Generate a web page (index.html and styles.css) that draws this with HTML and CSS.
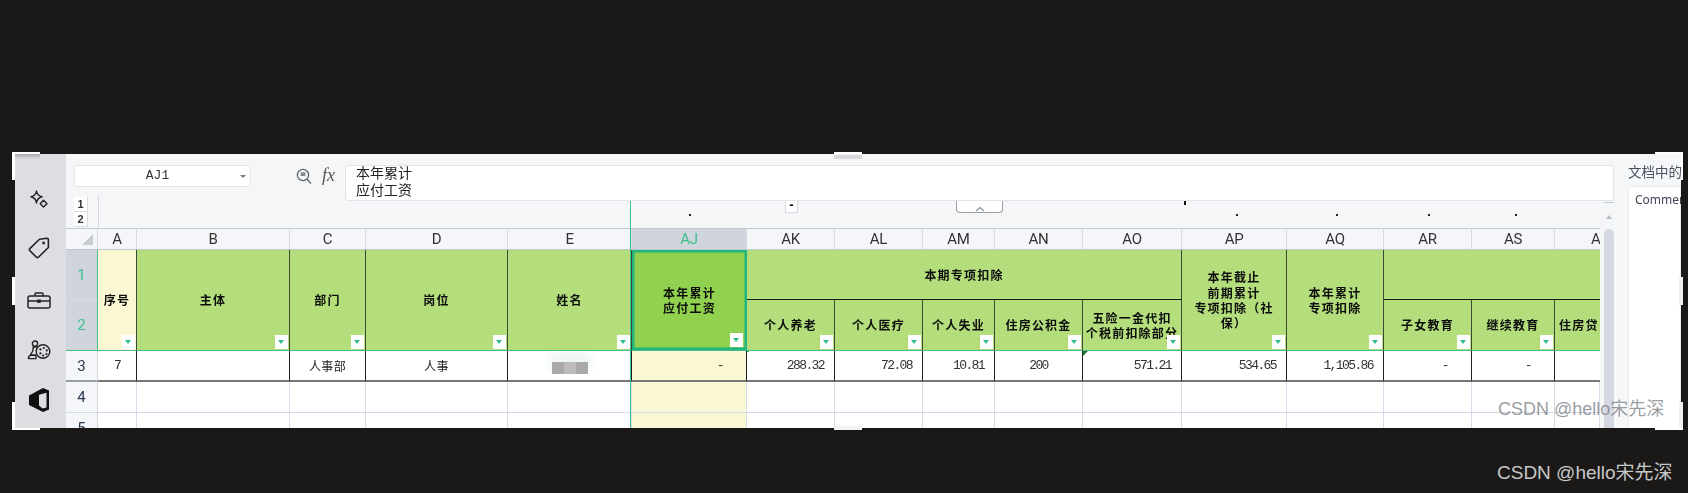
FILE: index.html
```html
<!DOCTYPE html>
<html lang="zh">
<head>
  <meta charset="utf-8">
  <title>工资表</title>
  <link rel="stylesheet" href="styles.css">
</head>
<body>
<div class="shot">
  <div class="window">
    <div class="blurry">
      <div class="sidebar">
        <svg class="ico" width="18" height="18" viewBox="0 0 18 18" fill="none" stroke="#222" stroke-width="1.4" stroke-linejoin="round"><path d="M6.5 1Q7.2 5.6 12 6.8Q7.2 8 6.5 13Q5.8 8 1 6.8Q5.8 5.6 6.5 1Z"/><path d="M13.5 10.2L17 13.7L13.5 17L10.2 13.7Z"/></svg>
        <svg class="ico" width="22" height="22" viewBox="0 0 22 22" fill="none" stroke="#222" stroke-width="1.6" stroke-linejoin="round"><path d="M11.5 2.2L19 1.2Q20.4 1.2 20.4 2.6V10.5L10.4 20.2Q9.4 21 8.4 20.2L1.8 13.6Q1 12.6 1.8 11.6Z"/><circle cx="15.6" cy="6" r="1.4" fill="#222" stroke="none"/></svg>
        <svg class="ico" width="24" height="17" viewBox="0 0 24 17" fill="none" stroke="#222" stroke-width="1.5" stroke-linejoin="round"><rect x="1" y="4" width="22" height="12" rx="2"/><path d="M8 4V2Q8 1 9 1H15Q16 1 16 2V4"/><path d="M1 9H23"/><rect x="10.2" y="7.5" width="3.6" height="3.4" fill="#222" stroke="none"/></svg>
        <svg class="ico" width="24" height="20" viewBox="0 0 24 20" fill="none" stroke="#222" stroke-width="1.4" stroke-linejoin="round"><circle cx="8" cy="3.6" r="2.6"/><path d="M5.4 7H10.6M6.4 7Q6.6 11 3.4 15H9M1.4 18.6Q1.4 15.4 4 15.4H9V18.6Z"/><circle cx="16" cy="11.5" r="6.8" fill="#dcdee2"/><g fill="#222" stroke="none"><circle cx="13.4" cy="9.4" r="1.1"/><circle cx="16.8" cy="8" r="1.1"/><circle cx="19.8" cy="10.4" r="1.1"/><circle cx="19.4" cy="14" r="1.1"/><circle cx="13.4" cy="13.4" r="1.1"/><circle cx="16.2" cy="15.6" r="1.1"/></g></svg>
        <svg class="ico" width="20" height="24" viewBox="0 0 20 24"><path d="M0 7.5L14 0L20 2.5V21.5L14 24L0 17Z" fill="#111"/><path d="M10 6.8L17.5 4.8V19.5L13.5 20.6L10 17.4Z" fill="#dcdee2"/></svg>
      </div>

      <div class="main">
        <div class="formula-bar">
          <div class="name-box">AJ1<span class="caret"></span></div>
          <svg class="zoom-ico" width="16" height="17" viewBox="0 0 16 17" fill="none" stroke="#5d6670" stroke-width="1.3"><circle cx="7" cy="7" r="5.6"/><path d="M4.6 7H9.4M4.6 5.2H9.4M11 11L15 15.6"/></svg>
          <span class="fx">fx</span>
          <div class="formula"><div class="formula-text">本年累计<br>应付工资</div></div>
        </div>

        <div class="work">
          <div class="sheet">
            <div class="outline">
              <div class="levels"><span>1</span><span>2</span></div>
              <span class="sel-line"></span>
              <span class="minus">-</span>
              <span class="fold"><svg width="10" height="6" viewBox="0 0 10 6" fill="none" stroke="#8c929c" stroke-width="1.2"><path d="M1 5L5 1.5L9 5"/></svg></span>
              <span class="tick"></span>
              <span class="dot d1"></span>
              <span class="dot d2"></span>
              <span class="dot d3"></span>
              <span class="dot d4"></span>
              <span class="dot d5"></span>
            </div>
            <table class="grid">
              <colgroup>
                <col class="w32"><col class="w39"><col class="w153"><col class="w76"><col class="w142"><col class="w124"><col class="w115">
                <col class="w88"><col class="w88"><col class="w72"><col class="w88"><col class="w99"><col class="w105"><col class="w97"><col class="w88"><col class="w83"><col class="w45">
              </colgroup>
              <tr class="letters">
                <th class="corner"><span class="tri"></span></th>
                <th>A</th><th>B</th><th>C</th><th>D</th><th>E</th><th class="cur">AJ</th>
                <th>AK</th><th>AL</th><th>AM</th><th>AN</th><th>AO</th><th>AP</th><th>AQ</th><th>AR</th><th>AS</th><th class="cut">A</th>
              </tr>
              <tr class="r1">
                <th class="num on">1</th>
                <td rowspan="2" class="hd cream">序号<i class="flt"></i></td>
                <td rowspan="2" class="hd">主体<i class="flt"></i></td>
                <td rowspan="2" class="hd">部门<i class="flt"></i></td>
                <td rowspan="2" class="hd">岗位<i class="flt"></i></td>
                <td rowspan="2" class="hd">姓名<i class="flt"></i></td>
                <td rowspan="2" class="hd active">本年累计<br>应付工资<i class="flt"></i><b class="handle"></b></td>
                <td colspan="5" class="hd group">本期专项扣除</td>
                <td rowspan="2" class="hd">本年截止<br>前期累计<br>专项扣除（社<br>保）<i class="flt"></i></td>
                <td rowspan="2" class="hd">本年累计<br>专项扣除<i class="flt"></i></td>
                <td colspan="3" class="hd group end"></td>
              </tr>
              <tr class="r2">
                <th class="num on">2</th>
                <td class="hd sub">个人养老<i class="flt"></i></td>
                <td class="hd sub">个人医疗<i class="flt"></i></td>
                <td class="hd sub">个人失业<i class="flt"></i></td>
                <td class="hd sub">住房公积金<i class="flt"></i></td>
                <td class="hd sub">五险一金代扣<br><span class="nowrap">个税前扣除部分</span><i class="flt"></i></td>
                <td class="hd sub">子女教育<i class="flt"></i></td>
                <td class="hd sub">继续教育<i class="flt"></i></td>
                <td class="hd sub end clip">住房贷</td>
              </tr>
              <tr class="r3">
                <th class="num">3</th>
                <td class="val mid">7</td>
                <td></td>
                <td class="txt">人事部</td>
                <td class="txt">人事</td>
                <td class="txt"><span class="mosaic"><i></i><i></i><i></i></span></td>
                <td class="val dash cream">-</td>
                <td class="val">288.32</td>
                <td class="val">72.08</td>
                <td class="val">10.81</td>
                <td class="val mid">200</td>
                <td class="val flag">571.21</td>
                <td class="val">534.65</td>
                <td class="val">1,105.86</td>
                <td class="val dash">-</td>
                <td class="val dash">-</td>
                <td></td>
              </tr>
              <tr class="blank">
                <th class="num">4</th>
                <td></td><td></td><td></td><td></td><td></td><td class="cream"></td>
                <td></td><td></td><td></td><td></td><td></td><td></td><td></td><td></td><td></td><td></td>
              </tr>
              <tr class="blank">
                <th class="num">5</th>
                <td></td><td></td><td></td><td></td><td></td><td class="cream"></td>
                <td></td><td></td><td></td><td></td><td></td><td></td><td></td><td></td><td></td><td></td>
              </tr>
            </table>
          </div>
          <div class="vscroll">
            <span class="vs-line"></span>
            <span class="vs-up"></span>
            <span class="vs-thumb"></span>
          </div>
        </div>
      </div>

      <div class="panel">
        <div class="panel-title">文档中的批注</div>
        <div class="panel-box">Comment</div>
      </div>
    </div>

    <!-- crop handles -->
    <span class="grip g-tl"></span>
    <span class="grip g-tc"></span>
    <span class="grip g-tr"></span>
    <span class="grip g-ml"></span>
    <span class="grip g-mr"></span>
    <span class="grip g-bl"></span>
    <span class="grip g-bc"></span>
    <span class="grip g-br"></span>

    <span class="mark-in">CSDN @hello宋先深</span>
  </div>
  <span class="mark-out">CSDN @hello宋先深</span>
</div>
</body>
</html>
```

FILE: styles.css
```css
* { box-sizing: border-box; }

html, body {
	margin: 0;
	height: 100%;
	overflow: hidden;
	background: #1a1918;
}

.shot {
	height: 493px;
	padding: 154px 0 0 15px;
	font-family: "Noto Sans CJK SC", "Noto Sans", sans-serif;
	color: #333;
}

.window {
	position: relative;
	width: 1666px;
	height: 274px;
}

.blurry {
	display: flex;
	height: 100%;
	overflow: hidden;
	filter: blur(0.35px);
}

/* left icon rail */
.sidebar {
	width: 51px;
	flex: none;
	background: #dcdee2;
	display: flex;
	flex-direction: column;
	align-items: center;
	padding-top: 36px;
}
.ico { flex: none; margin-right: 4px; }
.ico:nth-child(1) { margin-bottom: 29px; }
.ico:nth-child(2) { margin-bottom: 33px; }
.ico:nth-child(3) { margin-bottom: 31px; }
.ico:nth-child(4) { margin-bottom: 28px; }

.main {
	width: 1549px;
	flex: none;
	background: #f5f6f8;
}

/* formula bar */
.formula-bar {
	height: 47px;
	display: flex;
	align-items: flex-start;
	padding: 11px 1px 0 8px;
}
.name-box {
	position: relative;
	width: 177px;
	height: 22px;
	background: #fff;
	border: 1px solid #e4e6ea;
	border-radius: 3px;
	font: 13px/20px "Liberation Mono", monospace;
	text-align: center;
	padding-right: 10px;
}
.caret {
	position: absolute;
	right: 4px;
	top: 9px;
	border: 3px solid transparent;
	border-top: 3px solid #777;
	border-bottom: 0;
}
.zoom-ico { margin: 3px 0 0 45px; flex: none; }
.fx {
	width: 33px;
	padding-left: 10px;
	font: italic 18px/20px "Liberation Serif", serif;
	color: #555;
}
.formula {
	flex: 1;
	height: 36px;
	background: #fff;
	border: 1px solid #e2e4e9;
	border-radius: 3px;
	padding: 0 0 0 10px;
	overflow: hidden;
}
.formula-text {
	margin-top: -2px;
	font-size: 14px;
	line-height: 17px;
	color: #222;
}

.work {
	display: flex;
	height: 227px;
}
.sheet {
	width: 1534px;
	flex: none;
}

/* group outline strip */
.outline {
	position: relative;
	height: 27px;
}
.levels {
	position: absolute;
	left: 8px;
	top: -4px;
	width: 14px;
	font: 11px/14px "Liberation Sans", sans-serif;
	text-align: center;
	font-weight: bold;
}
.levels span {
	display: block;
	height: 15px;
	background: #fff;
	border: 1px solid #d8dbe3;
	border-width: 0 1px 1px 0;
}
.levels:after {
	content: "";
	position: absolute;
	left: 24px;
	top: -2px;
	height: 33px;
	border-left: 1px solid #d4d7df;
}
/* selected column edge, runs down over the sheet */
.sel-line {
	position: absolute;
	z-index: 1;
	left: 564px;
	top: 0;
	height: 227px;
	border-left: 1px solid #3fc08d;
}
.minus {
	position: absolute;
	left: 719px;
	top: 0;
	width: 13px;
	height: 12px;
	background: #fff;
	border: 1px solid #d4d7df;
	border-top: 0;
	font: bold 13px/8px "Liberation Sans", sans-serif;
	text-align: center;
	color: #000;
}
.fold {
	position: absolute;
	left: 890px;
	top: 0;
	width: 47px;
	height: 12px;
	background: #fff;
	border: 1.5px solid #9a9da3;
	border-top: 0;
	border-radius: 0 0 4px 4px;
	text-align: center;
	line-height: 8px;
}
.tick {
	position: absolute;
	left: 1118px;
	top: 0;
	width: 2px;
	height: 4px;
	background: #111;
}
.dot {
	position: absolute;
	top: 13px;
	width: 2px;
	height: 2px;
	background: #222;
}
.d1 { left: 623px; }
.d2 { left: 1170px; }
.d3 { left: 1270px; }
.d4 { left: 1362px; }
.d5 { left: 1449px; }

/* the sheet itself */
.grid {
	table-layout: fixed;
	width: 1534px;
	border-collapse: separate;
	border-spacing: 0;
	background: #fff;
}
.w32 { width: 32px; }
.w39 { width: 39px; }
.w153 { width: 153px; }
.w76 { width: 76px; }
.w142 { width: 142px; }
.w124 { width: 124px; }
.w115 { width: 115px; }
.w88 { width: 88px; }
.w72 { width: 72px; }
.w99 { width: 99px; }
.w105 { width: 105px; }
.w97 { width: 97px; }
.w83 { width: 83px; }
.w45 { width: 45px; }

th, td {
	padding: 0;
	overflow: hidden;
}

.letters th {
	height: 22px;
	background: #f5f6f9;
	border-top: 1px solid #c3c9d8;
	border-bottom: 1px solid #c0c5d2;
	border-right: 1px solid #d6d9e3;
	font: 400 15px/20px Roboto, sans-serif;
	letter-spacing: -0.3px;
	color: #333;
}
.letters .cur {
	background: #d0d4dc;
	color: #3cc08e;
}
.letters .cut {
	border-right: 0;
	text-align: left;
	padding-left: 36px;
}
.letters .corner { position: relative; }
.tri {
	position: absolute;
	right: 4px;
	bottom: 4px;
	border-style: solid;
	border-width: 0 0 11px 11px;
	border-color: transparent transparent #c9ccd2 transparent;
}

.r1 { height: 50px; }
.r2 { height: 51px; }
.r3 { height: 31px; }
.blank { height: 31px; }

.num {
	background: #f5f6f9;
	border-right: 1px solid #d0d4de;
	border-bottom: 1px solid #d5d9e6;
	font: 400 15px/18px Roboto, sans-serif;
	color: #2c3850;
	text-align: center;
}
.num.on {
	background: #d0d4dc;
	color: #3cc08e;
	border-right: 1.5px solid #45bd8d;
	border-bottom: 1px solid #d9dce3;
}
.r2 .num { border-bottom: 1px solid #45bd8d; }

.hd {
	position: relative;
	background: #b4de7c;
	font-size: 12px;
	font-weight: 700;
	line-height: 15.4px;
	letter-spacing: 1.2px;
	color: #0c0c0c;
	text-align: center;
	border-right: 1px solid #3f4a35;
	border-bottom: 1px solid #45bd8d;
}
.hd.cream { background: #faf7d2; }
.hd.group {
	border-bottom: 1px solid #1a1a1a;
}
.hd.end, .letters .end { border-right: 0; }
.hd.sub { white-space: nowrap; }
.clip { text-align: left; padding-left: 4px; }
.nowrap { white-space: nowrap; }

.hd.active {
	background: #90d14f;
	box-shadow: inset 0 0 0 2.5px #22b67c;
	overflow: visible;
	border-right: 0;
}
.handle {
	position: absolute;
	right: -2px;
	bottom: -2px;
	width: 4px;
	height: 4px;
	background: #22b67c;
}

/* filter button in header cell */
.flt {
	position: absolute;
	right: 1px;
	bottom: 1px;
	width: 13px;
	height: 14px;
	background: #fff;
}
.flt:after {
	content: "";
	position: absolute;
	left: 3px;
	top: 5px;
	border-style: solid;
	border-width: 4px 3.5px 0 3.5px;
	border-color: #2dbe8a transparent transparent transparent;
}
.active .flt { right: 4px; bottom: 3px; }

.r3 td {
	position: relative;
	border-right: 1px solid #222;
	border-bottom: 2px solid #777;
}
.r3 td:last-child { border-right: 0; }
.r3 .num { border-bottom: 2px solid #9a9ca3; }
.blank td {
	border-right: 1px solid #d8dbeb;
	border-bottom: 1px solid #d4d8ea;
}
.cream { background: #faf8d2; }

.val {
	font: 13px/18px "Liberation Mono", monospace;
	letter-spacing: -1.6px;
	text-align: right;
	padding-right: 10px;
	color: #333;
}
.val.mid { text-align: center; padding-right: 0; }
.val.dash { padding-right: 23px; }
.val.flag:before {
	content: "";
	position: absolute;
	left: 0;
	top: 0;
	border-style: solid;
	border-width: 5px 5px 0 0;
	border-color: #1f7a30 transparent transparent transparent;
}

.txt {
	font-size: 12px;
	letter-spacing: 0.4px;
	text-align: center;
	color: #222;
}

/* blurred-out name */
.mosaic {
	display: inline-flex;
	vertical-align: middle;
	box-shadow: 0 -7px 9px 3px #eff7f2;
}
.mosaic i {
	width: 12px;
	height: 12px;
	background: #a9a9a9;
}
.mosaic i:nth-child(2) { background: #bcbcbc; }

/* scrollbar */
.vscroll {
	position: relative;
	width: 15px;
	background: #f5f6f8;
}
.vs-line {
	position: absolute;
	left: 4px;
	top: 1px;
	width: 10px;
	border-top: 1px solid #c3c9d8;
}
.vs-up {
	position: absolute;
	left: 6px;
	top: 14px;
	border-style: solid;
	border-width: 0 3px 4px 3px;
	border-color: transparent transparent #b5bac6 transparent;
}
.vs-thumb {
	position: absolute;
	left: 4px;
	top: 28px;
	width: 10px;
	height: 210px;
	background: #d5d8e0;
	border-radius: 5px;
}

/* right panel */
.panel {
	flex: 1;
	min-width: 0;
	background: #f6f7f9;
	overflow: hidden;
	padding-top: 8px;
	white-space: nowrap;
}
.panel-title {
	padding-left: 13px;
	font-size: 13.5px;
	line-height: 18px;
	color: #4a5160;
}
.panel-box {
	height: 260px;
	margin: 6px 0 0 13px;
	padding: 4px 0 0 6px;
	background: #fff;
	border: 1px solid #e8eaef;
	border-radius: 3px 0 0 0;
	font: 12px/18px "Noto Sans", sans-serif;
	color: #3c4656;
}

/* crop handles round the picture */
.grip {
	position: absolute;
	background: #fff;
}
.grip:before, .grip:after {
	content: "";
	position: absolute;
	background: #fff;
}
.g-tl { left: -3px; top: -2px; width: 28px; height: 2px; }
.g-tl:before { left: 0; top: 0; width: 3px; height: 28px; }
.g-tl:after { left: 3px; top: 2px; width: 25px; height: 5px; background: linear-gradient(#a9abaf, #dcdee2); }
.g-tc { left: 819px; top: -2px; width: 28px; height: 2px; }
.g-tc:after { left: 0; top: 3px; width: 28px; height: 4px; background: #d9dadd; }
.g-tr { left: 1640px; top: -2px; width: 28px; height: 2px; }
.g-tr:before { right: 0; top: 0; width: 2px; height: 28px; }
.g-ml { left: -3px; top: 123px; width: 3px; height: 28px; }
.g-mr { left: 1664px; top: 123px; width: 4px; height: 28px; background: #f0f1f3; }
.g-bl { left: -3px; top: 248px; width: 3px; height: 28px; }
.g-bl:before { left: 0; top: 26px; width: 28px; height: 2px; }
.g-bc { left: 819px; top: 272px; width: 28px; height: 4px; background: #f2f2f2; }
.g-br { left: 1664px; top: 248px; width: 4px; height: 28px; background: #f0f1f3; }
.g-br:before { right: 0; top: 26px; width: 28px; height: 2px; }

/* watermarks */
.mark-in, .mark-out {
	position: absolute;
	font-family: "Liberation Sans", "Noto Sans CJK SC", sans-serif;
	white-space: nowrap;
}
.mark-in {
	left: 1483px;
	top: 243px;
	font-size: 18px;
	line-height: 24px;
	color: rgba(120, 124, 130, 0.75);
}
.mark-out {
	left: 1497px;
	top: 460px;
	font-size: 19px;
	line-height: 26px;
	color: #c8c8c8;
}
```
